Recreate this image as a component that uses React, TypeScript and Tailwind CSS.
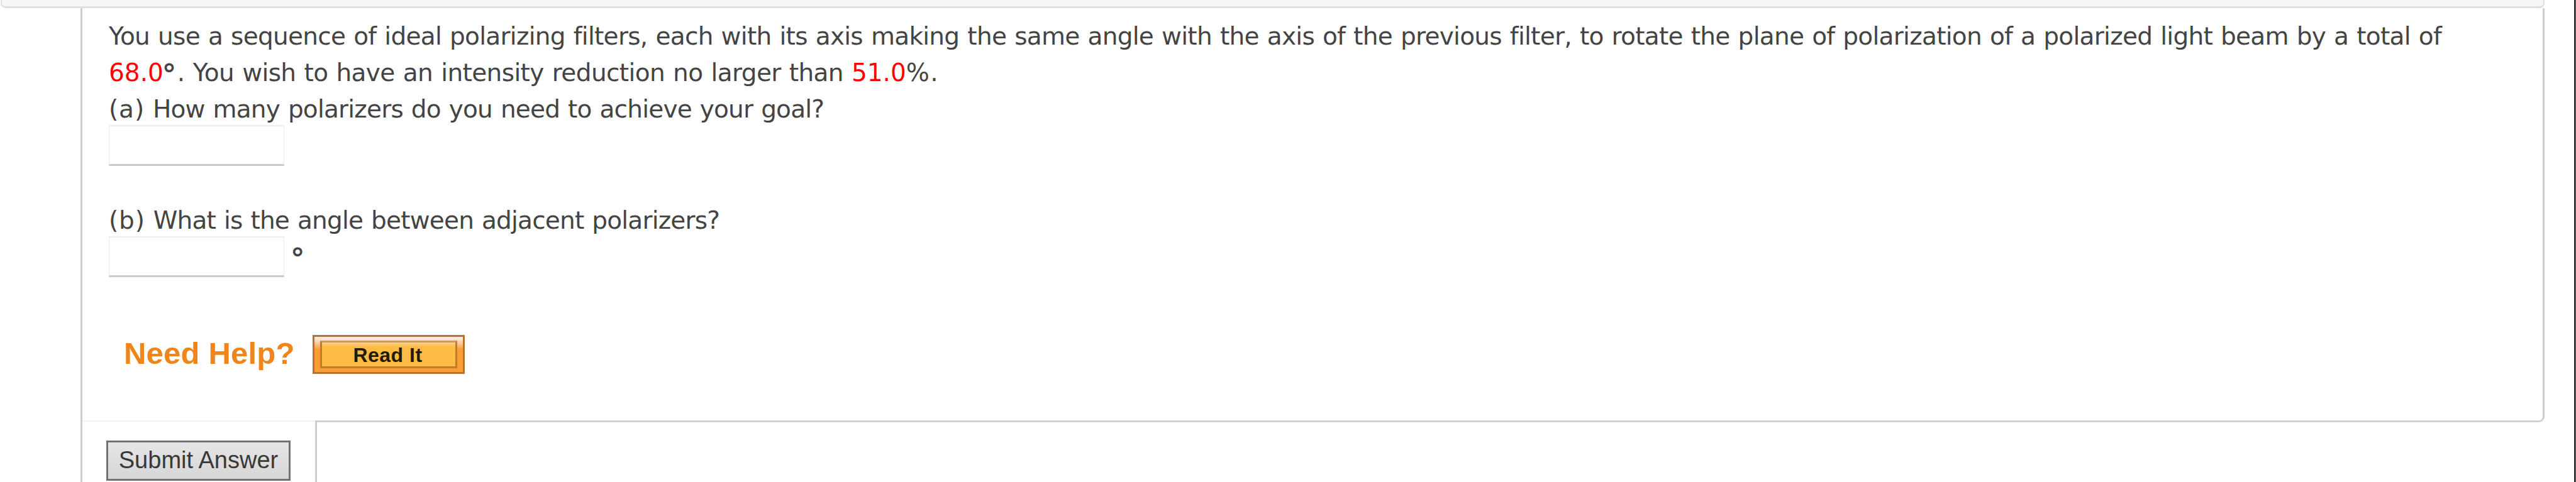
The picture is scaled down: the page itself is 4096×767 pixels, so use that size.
import type { ReactNode } from 'react'

function Given({ children }: { children: ReactNode }) {
  return <span className="tracking-normal text-[#ff0000]">{children}</span>
}

function Part({ children }: { children: ReactNode }) {
  return <span className="tracking-[0.9px]">{children}</span>
}

function Degree() {
  return (
    <span className="inline-block w-[22px] align-[-5px] text-[45px] leading-none font-bold tracking-normal">
      <span className="-ml-[2px]">°</span>
    </span>
  )
}

function AnswerInput({ label }: { label: string }) {
  return (
    <input
      type="text"
      aria-label={label}
      className="block h-[65px] w-[279px] border-x-[1px] border-t-2 border-b-[3px] border-x-[#ececec] border-t-[#eeeeee] border-b-[#cacaca] bg-white outline-none"
    />
  )
}

function ReadItButton() {
  return (
    <button
      type="button"
      className="h-[62px] w-[242px] border-[3px] border-[#b4732f] bg-linear-to-b from-[#ffe9d6] from-5% via-[#fb9c35] via-35% to-[#fb9c35] px-[9px] py-[6px]"
    >
      <span className="flex h-full items-center justify-center border-[3px] border-[#c07c28] border-t-[#c99a6c] bg-linear-to-b from-[#fdce80] to-[#fcbb43] to-20% pt-px pr-[3px] font-['Liberation_Sans',sans-serif] text-[32px] leading-none font-bold tracking-[0.5px] text-[#241a08]">
        Read It
      </span>
    </button>
  )
}

function Question() {
  return (
    <section className="h-[656px] pt-4 pl-[42px] font-['DejaVu_Sans',sans-serif] text-[39px] leading-[58px] tracking-[-0.8px] whitespace-nowrap text-[#444444] [word-spacing:1.3px]">
      <p className="h-[58px] tracking-[-0.72px]">
        You use a sequence of ideal polarizing filters, each with its axis making the same angle with the axis of the
        previous filter, to rotate the plane of polarization of a polarized light beam by a total of
      </p>
      <p className="h-[58px] tracking-[-0.62px]">
        <Given>68.0</Given>
        <Degree />. You wish to have an intensity reduction no larger than <Given>51.0</Given>
        <span className="tracking-[1.5px]">%.</span>
      </p>
      <p>
        <Part>(a)</Part> How many polarizers do you need to achieve your goal?
      </p>
      <div className="-mt-1">
        <AnswerInput label="Number of polarizers" />
      </div>
      <p className="mt-[58px]">
        <Part>(b)</Part> What is the angle between adjacent polarizers?
      </p>
      <div className="-mt-1 flex h-[65px] gap-[12px]">
        <AnswerInput label="Angle" />
        <span className="mt-[4px]">
          <Degree />
        </span>
      </div>
      <div className="mt-[92px] flex items-center pl-[24px]">
        <span className="-mt-1 mr-[30px] w-[270px] font-['Liberation_Sans',sans-serif] text-[49px] leading-[62px] font-bold tracking-[0.2px] text-[#f08519] [word-spacing:0]">
          Need Help?
        </span>
        <ReadItButton />
      </div>
    </section>
  )
}

export default function App() {
  return (
    <div className="flex h-[767px] w-[4096px] justify-between overflow-hidden bg-white">
      <main className="flex w-[4046px] flex-col">
        <header className="ml-px h-[13px] shrink-0 rounded-b-lg border-x-2 border-b-[3px] border-[#e0e0e0] bg-[#f6f6f6]" />
        <div className="ml-[128px] flex grow flex-col">
          <div className="rounded-br-[9px] border-r-[3px] border-b-[3px] border-l-[3px] border-r-[#cecece] border-b-[#d0d0d0] border-l-[#cecece]">
            <Question />
          </div>
          <div className="-mt-[3px] flex h-[98px] w-[376px] border-r-[3px] border-l-[3px] border-[#cecece] bg-white">
            <div className="grow border-t-2 border-[#f2f2f2] pt-[30px] pl-[38px]">
              <button
                type="button"
                className="h-[64px] w-[293px] border-[3px] border-[#727272] bg-linear-to-b from-[#e6e6e6] to-[#d6d6d6] pb-[2px] font-['Liberation_Sans',sans-serif] text-[38px] leading-none whitespace-nowrap text-[#383838]"
              >
                Submit Answer
              </button>
            </div>
          </div>
        </div>
      </main>
      <div className="w-[3px] border-r border-[#6b6b70] bg-[#26262a]" />
    </div>
  )
}
